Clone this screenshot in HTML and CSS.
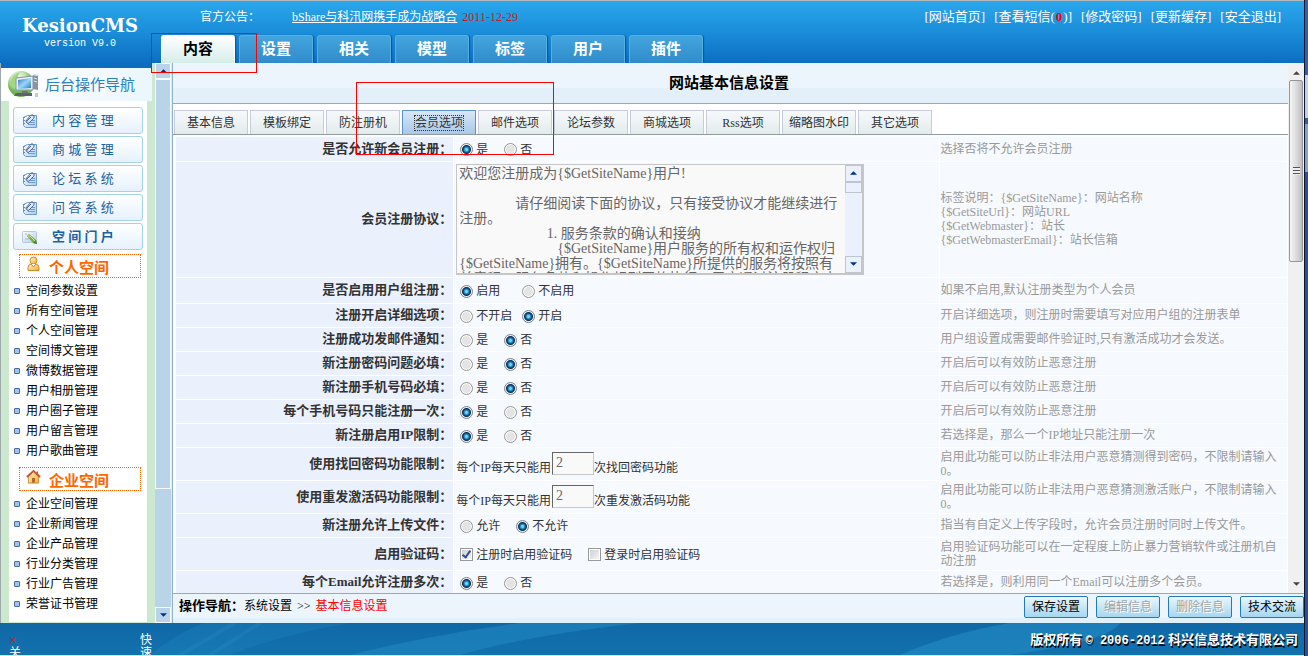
FILE: index.html
```html
<!DOCTYPE html>
<html lang="zh-CN">
<head>
<meta charset="utf-8">
<title>KesionCMS</title>
<link rel="stylesheet" href="styles.css">
</head>
<body>
<svg class="sprite" aria-hidden="true">
  <defs>
    <linearGradient id="paper" x1="0" y1="0" x2="1" y2="1"><stop offset="0" stop-color="#fff"/><stop offset="1" stop-color="#a9cbf0"/></linearGradient>
    <radialGradient id="globe" cx=".4" cy=".3"><stop offset="0" stop-color="#fff"/><stop offset=".6" stop-color="#c3e2b0"/><stop offset="1" stop-color="#6fb552"/></radialGradient>
    <linearGradient id="screen" x1="0" y1="0" x2="1" y2="1"><stop offset="0" stop-color="#2d76bd"/><stop offset=".5" stop-color="#9bd6f7"/><stop offset="1" stop-color="#2377c4"/></linearGradient>
    <linearGradient id="gold" x1="0" y1="0" x2="1" y2="1"><stop offset="0" stop-color="#fff6d0"/><stop offset="1" stop-color="#f3ad2e"/></linearGradient>
    <symbol id="doc" viewBox="0 0 16 16">
      <path d="M5.500 2.500h9v12h-11l-2-2v-8z" fill="url(#paper)" stroke="#6f9ad0"/>
      <path d="M1 4.500h2M1 7.500h2M1 10.500h2" stroke="#5c8bc6"/>
      <path d="M9 7.500h4M7 9.500h6M6 11.500h7" stroke="#6d9bd0"/>
      <path d="M3.500 8.500l5-6q1.500-1.500 3 0t0 3L7 10q-1 1-2 0t0-2l4-4" fill="none" stroke="#51698d"/>
    </symbol>
    <symbol id="card" viewBox="0 0 16 16">
      <rect x=".5" y="2.500" width="14" height="11" rx="1" fill="url(#paper)" stroke="#b8c8dd"/>
      <path d="M3 5h2M3 10h4" stroke="#9fb9d8"/>
      <path d="M7 5l7 6 1 4-4-1-6-7z" fill="#72b52e"/><path d="M7 5l-2 2 2 2 2-2z" fill="#e5ad52"/><path d="M14 11l1 4-4-1z" fill="#567a2d"/><path d="M8 7l5 5" stroke="#c4e994"/>
    </symbol>
    <symbol id="person" viewBox="0 0 14 16">
      <path d="M1.500 14.500v-3q0-3 3-3.500h5q3 .5 3 3.500v3z" fill="url(#gold)" stroke="#cd8b2c"/>
      <circle cx="7" cy="4.500" r="3.500" fill="url(#gold)" stroke="#cd8b2c"/><path d="M4.500 8l2.500 3 2.500-3" fill="#fff" stroke="#cd8b2c"/>
    </symbol>
    <symbol id="house" viewBox="0 0 16 16">
      <path d="M2.500 7v7.500h11V7L8 2z" fill="url(#gold)" stroke="#c88a35"/><path d="M6.500 14V9h3v5z" fill="#b06222"/><path d="M1 8l7-6.500L15 8" fill="none" stroke="#cf5022" stroke-width="2"/><path d="M12 2v3" stroke="#b75a2d" stroke-width="1.500"/>
    </symbol>
    <symbol id="computer" viewBox="0 0 34 32">
      <circle cx="14" cy="15" r="13" fill="url(#globe)"/><path d="M3 13q3-8 10-10-3 5-2 8l-4 8q-4-2-4-6" fill="#a5d681"/>
      <path d="M26 6l5 1v14l-5-1z" fill="#8a949e"/><path d="M26 6l2-1 4 1-1 1z" fill="#d7dde3"/><path d="M27 9l3 1M27 12l3 1" stroke="#e0e8ef"/>
      <path d="M9 9l17-2v14L9 21z" fill="#e8eff5" stroke="#8794a1"/><path d="M11 11l13-2v10l-13 1z" fill="url(#screen)"/><path d="M15 22h6v2h-6z" fill="#6c7782"/><path d="M9 24h16v3H7z" fill="#5a626a"/><path d="M28 24h3v4h-3z" fill="#c3cad0"/>
    </symbol>
    <symbol id="up" viewBox="0 0 8 4"><path d="M0 4l4-4 4 4z" fill="currentColor"/></symbol>
    <symbol id="down" viewBox="0 0 8 4"><path d="M0 0l4 4 4-4z" fill="currentColor"/></symbol>
  </defs>
</svg>
<div class="window">
  <div class="app">
    <header class="header">
      <div class="brand"><strong class="brand-name">KesionCMS</strong><span class="brand-version">version V9.0</span></div>
      <div class="header-body">
        <div class="header-top">
          <div class="notice"><span class="notice-label">官方公告：</span><a href="#">bShare与科汛网携手成为战略合</a><span class="notice-date">2011-12-29</span></div>
          <nav class="user-links"><a href="#">[网站首页]</a><a href="#">[查看短信(<b>0</b>)]</a><a href="#">[修改密码]</a><a href="#">[更新缓存]</a><a href="#">[安全退出]</a></nav>
        </div>
        <nav class="main-tabs">
          <a class="main-tab is-active" href="#">内容</a><a class="main-tab" href="#">设置</a><a class="main-tab" href="#">相关</a><a class="main-tab" href="#">模型</a><a class="main-tab" href="#">标签</a><a class="main-tab" href="#">用户</a><a class="main-tab" href="#">插件</a>
        </nav>
      </div>
    </header>

    <div class="middle">
      <aside class="sidebar">
        <h2 class="sidebar-title"><svg><use href="#computer"/></svg>后台操作导航</h2>
        <div class="sidebar-body">
          <button class="menu-btn"><svg><use href="#doc"/></svg>内 容 管 理</button>
          <button class="menu-btn"><svg><use href="#doc"/></svg>商 城 管 理</button>
          <button class="menu-btn"><svg><use href="#doc"/></svg>论 坛 系 统</button>
          <button class="menu-btn"><svg><use href="#doc"/></svg>问 答 系 统</button>
          <button class="menu-btn is-open"><svg><use href="#card"/></svg>空 间 门 户</button>
          <h3 class="group"><svg><use href="#person"/></svg><span>个人空间</span></h3>
          <ul class="links">
            <li><a href="#">空间参数设置</a></li><li><a href="#">所有空间管理</a></li><li><a href="#">个人空间管理</a></li><li><a href="#">空间博文管理</a></li><li><a href="#">微博数据管理</a></li><li><a href="#">用户相册管理</a></li><li><a href="#">用户圈子管理</a></li><li><a href="#">用户留言管理</a></li><li><a href="#">用户歌曲管理</a></li>
          </ul>
          <h3 class="group"><svg><use href="#house"/></svg><span>企业空间</span></h3>
          <ul class="links">
            <li><a href="#">企业空间管理</a></li><li><a href="#">企业新闻管理</a></li><li><a href="#">企业产品管理</a></li><li><a href="#">行业分类管理</a></li><li><a href="#">行业广告管理</a></li><li><a href="#">荣誉证书管理</a></li>
          </ul>
        </div>
      </aside>
      <div class="side-scroll"><span class="side-arrow"><svg><use href="#up"/></svg></span><span class="side-thumb"></span><span class="side-arrow"><svg><use href="#down"/></svg></span></div>

      <main class="main">
        <div class="content">
          <div class="page">
            <h1 class="page-title">网站基本信息设置</h1>
            <nav class="tabs">
              <button class="tab">基本信息</button><button class="tab">模板绑定</button><button class="tab">防注册机</button><button class="tab is-active"><span>会员选项</span></button><button class="tab">邮件选项</button><button class="tab">论坛参数</button><button class="tab">商城选项</button><button class="tab">Rss选项</button><button class="tab">缩略图水印</button><button class="tab">其它选项</button>
            </nav>
            <div class="form-area">
            <table class="form">
              <tr><th>是否允许新会员注册：</th><td><div class="options"><label><input type="radio" name="reg" checked>是</label><label><input type="radio" name="reg">否</label></div></td><td class="note">选择否将不允许会员注册</td></tr>
              <tr class="row-agreement"><th><label for="agreement">会员注册协议：</label></th><td><div class="agreement"><textarea id="agreement" wrap="off">欢迎您注册成为{$GetSiteName}用户!

　　　　请仔细阅读下面的协议，只有接受协议才能继续进行
注册。
　　　　　　 1. 服务条款的确认和接纳
　　　　　　　{$GetSiteName}用户服务的所有权和运作权归
{$GetSiteName}拥有。{$GetSiteName}所提供的服务将按照有
关章程、服务条款和操作规则严格执行。用户通过注册程序点</textarea><div class="area-scroll"><span class="area-arrow"><svg><use href="#up"/></svg></span><span class="area-thumb"></span><span class="area-arrow area-arrow-down"><svg><use href="#down"/></svg></span></div></div></td><td class="note">标签说明：{$GetSiteName}：网站名称<br>{$GetSiteUrl}：网站URL<br>{$GetWebmaster}：站长<br>{$GetWebmasterEmail}：站长信箱</td></tr>
              <tr class="row-group"><th>是否启用用户组注册：</th><td><div class="options options-wide"><label><input type="radio" name="grp" checked>启用</label><label><input type="radio" name="grp">不启用</label></div></td><td class="note">如果不启用,默认注册类型为个人会员</td></tr>
              <tr><th>注册开启详细选项：</th><td><div class="options options-tight"><label><input type="radio" name="detail">不开启</label><label><input type="radio" name="detail" checked>开启</label></div></td><td class="note">开启详细选项，则注册时需要填写对应用户组的注册表单</td></tr>
              <tr><th>注册成功发邮件通知：</th><td><div class="options"><label><input type="radio" name="mail">是</label><label><input type="radio" name="mail" checked>否</label></div></td><td class="note">用户组设置成需要邮件验证时,只有激活成功才会发送。</td></tr>
              <tr><th>新注册密码问题必填：</th><td><div class="options"><label><input type="radio" name="question">是</label><label><input type="radio" name="question" checked>否</label></div></td><td class="note">开启后可以有效防止恶意注册</td></tr>
              <tr><th>新注册手机号码必填：</th><td><div class="options"><label><input type="radio" name="mobile">是</label><label><input type="radio" name="mobile" checked>否</label></div></td><td class="note">开启后可以有效防止恶意注册</td></tr>
              <tr><th>每个手机号码只能注册一次：</th><td><div class="options"><label><input type="radio" name="once" checked>是</label><label><input type="radio" name="once">否</label></div></td><td class="note">开启后可以有效防止恶意注册</td></tr>
              <tr><th>新注册启用IP限制：</th><td><div class="options"><label><input type="radio" name="ip" checked>是</label><label><input type="radio" name="ip">否</label></div></td><td class="note">若选择是，那么一个IP地址只能注册一次</td></tr>
              <tr class="row-tall"><th>使用找回密码功能限制：</th><td><label class="limit">每个IP每天只能用<input type="text" value="2">次找回密码功能</label></td><td class="note">启用此功能可以防止非法用户恶意猜测得到密码，不限制请输入0。</td></tr>
              <tr class="row-tall"><th>使用重发激活码功能限制：</th><td><label class="limit">每个IP每天只能用<input type="text" value="2">次重发激活码功能</label></td><td class="note">启用此功能可以防止非法用户恶意猜测激活账户，不限制请输入0。</td></tr>
              <tr><th>新注册允许上传文件：</th><td><div class="options"><label><input type="radio" name="upload">允许</label><label><input type="radio" name="upload" checked>不允许</label></div></td><td class="note">指当有自定义上传字段时，允许会员注册时同时上传文件。</td></tr>
              <tr class="row-tall"><th>启用验证码：</th><td><div class="options"><label><input type="checkbox" checked>注册时启用验证码</label><label><input type="checkbox">登录时启用验证码</label></div></td><td class="note">启用验证码功能可以在一定程度上防止暴力营销软件或注册机自动注册</td></tr>
              <tr><th>每个Email允许注册多次：</th><td><div class="options"><label><input type="radio" name="email" checked>是</label><label><input type="radio" name="email">否</label></div></td><td class="note">若选择是，则利用同一个Email可以注册多个会员。</td></tr>
            </table>
            </div>
          </div>
          <div class="page-scroll"><svg><use href="#up"/></svg><span class="page-thumb"><i></i></span><svg><use href="#down"/></svg></div>
        </div>
        <div class="actions">
          <p class="crumbs"><b>操作导航：</b>系统设置<span class="crumb-sep">&gt;&gt;</span><em>基本信息设置</em></p>
          <div class="buttons"><button class="btn">保存设置</button><button class="btn" disabled>编辑信息</button><button class="btn" disabled>删除信息</button><button class="btn">技术交流</button></div>
        </div>
      </main>
    </div>

    <footer class="footer">
      <svg class="waves" preserveAspectRatio="none" viewBox="0 0 1304 32"><path d="M150 32Q180 8 205 0H350Q280 12 230 32z" fill="#2187c2" opacity=".3"/><path d="M180 32L235 0M210 32L260 0" stroke="#3fa0d5" stroke-width="4" opacity=".15"/><path d="M350 32Q430 12 520 0H640Q530 12 460 32z" fill="#2187c2" opacity=".6"/><path d="M900 32Q950 10 1010 0H1120Q1110 18 1010 32z" fill="#2187c2" opacity=".7"/></svg>
      <div class="foot-left"><a class="foot-close" href="#"><i>×</i>关</a><a class="foot-quick" href="#">快速</a></div>
      <p class="copyright">版权所有 <span>© 2006-2012</span> 科兴信息技术有限公司</p>
    </footer>
  </div>
  <div class="edge"></div>
</div>
<div class="mark mark-menu"></div>
<div class="mark mark-tab"></div>
</body>
</html>
```
FILE: styles.css
```css
*, *::before, *::after { box-sizing: border-box; }
body, h1, h2, h3, p, ul { margin: 0; padding: 0; }
body { font: 12px/14px "Liberation Serif", "Noto Sans CJK SC", sans-serif; color: #000; overflow: hidden; }
button, input, textarea { font: inherit; }
a { color: inherit; text-decoration: none; }
ul { list-style: none; }
.sprite { position: absolute; width: 0; height: 0; }
.window { display: flex; height: 100vh; }
.app { flex: 1; min-width: 0; display: flex; flex-direction: column; }
.edge { width: 4px; border-left: 1px solid #0a1530; background: linear-gradient(#3a5f9f 0 75px, #c4d0e2 75px 118px, #3c5c9a 118px 124px, #8ba1c4 124px 172px, #2c5093 172px); }

/* Header */
.header { flex: none; display: flex; height: 63px; border-top: 1px solid #b5b9bb; background: linear-gradient(#2aa7ec, #1b8dd9 50%, #0c6ec0); color: #fff; }
.brand { width: 160px; padding-top: 13px; display: flex; flex-direction: column; align-items: center; }
.brand-name { font: bold 18px/23px "DejaVu Serif", serif; }
.brand-version { font: 10px/13px "Liberation Mono", monospace; }
.header-body { flex: 1; display: flex; flex-direction: column; justify-content: space-between; }
.header-top { display: flex; justify-content: space-between; align-items: center; height: 32px; padding: 0 23px 0 40px; }
.notice { display: flex; }
.notice-label { width: 92px; }
.notice a { text-decoration: underline; }
.notice-date { margin-left: 5px; color: #d8141c; }
.user-links { display: flex; gap: 9px; font-size: 13px; }
.user-links b { padding: 0 1px; color: #f00; }
.main-tabs { display: flex; gap: 4px; padding-left: 1px; }
.main-tab { width: 74px; height: 28px; border: 1px solid #56b0e3; border-bottom: 0; border-radius: 3px 3px 0 0; box-shadow: 1px 0 1px #07549a; background: linear-gradient(#43a5de, #308bca); font-size: 15px; font-weight: bold; line-height: 26px; text-align: center; }
.main-tab.is-active { background: linear-gradient(#fff, #d5ede9); border-color: #fff; color: #000; }

/* Sidebar */
.middle { flex: 1; min-height: 0; display: flex; }
.sidebar { width: 155px; border-left: 1px solid #9fa9ae; background: #cce8cf; overflow: hidden; }
.sidebar-title { display: flex; align-items: center; gap: 3px; height: 38px; margin-right: 3px; padding-left: 5px; border-top: 5px solid #0c6cbd; background: linear-gradient(100deg, #fff, #eaf5fd); color: #2a80c2; font-size: 15px; font-weight: normal; }
.sidebar-title svg { width: 36px; height: 32px; }
.sidebar-body { margin: 0 8px; padding: 6px 4px; background: #fff; }
.menu-btn { display: flex; align-items: center; gap: 14px; width: 100%; height: 27px; margin-bottom: 2px; padding: 0 8px; border: 1px solid #a3d4e3; border-radius: 3px; background: linear-gradient(#fff, #e6f1fd); color: #1c629d; font-size: 13px; }
.menu-btn svg { width: 16px; height: 16px; }
.menu-btn.is-open { font-weight: bold; }
.group { display: flex; align-items: center; gap: 8px; height: 24px; margin: 4px 2px 0 6px; padding-left: 6px; border: 1px dotted #f60; color: #f60; font-size: 15px; }
.group svg { width: 15px; height: 16px; margin-bottom: 4px; }
.group span { padding-top: 4px; }
.links { padding: 3px 0 2px; }
.links li { display: flex; align-items: center; gap: 6px; height: 20px; padding-left: 1px; }
.links li::before { content: ""; width: 6px; height: 6px; border: 1px solid #49699a; border-radius: 1px; background: #9fc5f6; }
.side-scroll { width: 17px; display: flex; flex-direction: column; background: #b9d3e9; border-right: 1px solid #dcebf7; color: #003087; }
.side-arrow { display: flex; align-items: center; justify-content: center; height: 16px; border: 1px solid #f5faff; background: #b9d3e9; }
.side-arrow svg, .area-arrow svg { width: 7px; height: 4px; }
.side-thumb { height: 410px; border: 1px solid #f5faff; }
.side-scroll .side-arrow:last-child { margin-top: auto; }

/* Main panel */
.main { flex: 1; min-width: 0; display: flex; flex-direction: column; border-left: 1px solid #8fb2c8; }
.content { flex: 1; min-height: 0; display: flex; background: #fff; }
.page { flex: 1; min-width: 0; overflow: hidden; }
.page-title { height: 41px; padding-right: 3px; border-bottom: 1px solid #83afc8; background: linear-gradient(#edf5fc 0 25px, #e3f0fa 25px); font-size: 15px; line-height: 41px; text-align: center; }
.tabs { display: flex; gap: 2px; height: 31px; padding: 6px 0 0 1px; border-bottom: 1px solid #8f9a9b; }
.tab { width: 74px; height: 24px; padding: 0; border: 1px solid #c8cbe0; border-bottom: 0; background: linear-gradient(#f7f9fb, #e3ebec); color: #333; line-height: 20px; }
.tab.is-active { border-color: #5b92cc; background: linear-gradient(#d7e8f8, #a9c8e8); }
.tab.is-active span { outline: 1px dotted #333; }
.form-area { padding: 2px 1px 0 3px; background: #fbfdff; }
.form { width: 100%; table-layout: fixed; border-collapse: collapse; color: #333; }
.form th, .form td { height: 24px; padding: 0 1px; border-bottom: 1px solid #fff; background: #f6f9fe; overflow: hidden; }
.form th { width: 25%; padding-right: 1px; background: #eaf0fc; font-size: 13px; text-align: right; }
.form td { padding-left: 2px; border-left: 1px solid #fff; }
.form .note { width: 348px; padding-left: 1px; color: #999; }
.form .row-agreement th, .form .row-agreement td { height: 116px; }
.form .row-group th, .form .row-group td { height: 26px; }
.form .row-tall th, .form .row-tall td { height: 33px; }
.options { display: flex; gap: 16px; padding: 2px 0 0 4px; }
.options-wide { gap: 22px; }
.options-tight { gap: 10px; }
.options label { display: flex; align-items: center; gap: 3px; }
.options input { appearance: none; width: 13px; height: 13px; margin: 0; border: 1px solid #999; background: #e4e4e4; box-shadow: inset 0 0 0 1px #fff; }
.options input[type="radio"] { border-radius: 50%; }
.options input[type="radio"]:checked { border-color: #7c868c; background: radial-gradient(circle at 50% 50%, #6bd5f7 0 1px, #075a99 3px, #0b2f55 4px, #eee 5px); box-shadow: none; }
.options input[type="checkbox"] { background: linear-gradient(135deg, #c8cdd0, #f8f8f8); }
.options input[type="checkbox"]:checked::after { content: ""; display: block; width: 5px; height: 9px; margin-left: 3px; border: solid #2e4d9a; border-width: 0 2px 2px 0; transform: rotate(35deg); }
.agreement { display: flex; width: 408px; max-width: 100%; height: 111px; border: 2px solid #c6c6c6; border-width: 1px 2px 2px 1px; background: #f9f9f9; }
.agreement textarea { flex: 1; min-width: 0; padding: 1px 2px; border: 0; background: none; resize: none; overflow: hidden; color: #666; font-size: 14px; line-height: 15px; }
.area-scroll { width: 17px; display: flex; flex-direction: column; background: #eaf1fc; color: #003087; }
.area-arrow { display: flex; align-items: center; justify-content: center; height: 17px; border: 1px solid #bcc6d2; }
.area-thumb { height: 11px; border: 1px solid #bcc6d2; }
.area-arrow-down { margin-top: auto; }
.limit { display: flex; align-items: flex-end; }
.limit input { width: 42px; height: 23px; margin-left: 1px; padding: 0 3px 2px; border: 1px solid #c8c8c8; border-top-color: #666; border-left-color: #666; background: #f9f9f9; color: #666; font-size: 14px; }
.page-scroll { width: 16px; display: flex; flex-direction: column; align-items: center; padding: 8px 1px 7px; background: #f0f0f0; color: #444; }
.page-scroll svg { width: 7px; height: 4px; }
.page-thumb { display: flex; align-items: center; justify-content: center; width: 14px; height: 182px; margin: 5px 0 auto; border: 1px solid #969696; border-radius: 2px; background: linear-gradient(90deg, #f5f5f5, #ddd 50%, #bfbfc3); }
.page-thumb i { width: 7px; height: 8px; background: repeating-linear-gradient(#555 0 1px, #eee 1px 3px); }

/* Action bar */
.actions { flex: none; display: flex; justify-content: space-between; align-items: flex-start; height: 30px; padding-top: 2px; border-top: 1px solid #83afc8; background: linear-gradient(#edf5fc 0 24px, #e0f1fb 24px); }
.crumbs { padding-left: 6px; line-height: 20px; }
.crumbs b { font-size: 13px; }
.crumb-sep { margin: 0 5px; }
.crumbs em { color: #f00; font-style: normal; }
.buttons { display: flex; gap: 8px; }
.btn { width: 64px; height: 22px; padding: 0; border: 1px solid #2579b9; border-radius: 2px; background: linear-gradient(#eaf7fe, #a5d6ee); color: #000; }
.btn:disabled { color: #a0a5a8; text-shadow: 1px 1px #fff; }

/* Footer */
.footer { flex: none; position: relative; display: flex; justify-content: space-between; height: 33px; border-bottom: 1px solid #d5e7f5; background: linear-gradient(#1068a5, #1272ae); color: #fff; overflow: hidden; }
.waves { position: absolute; width: 100%; height: 100%; }
.foot-left { position: relative; display: flex; gap: 119px; padding: 11px 0 0 9px; }
.foot-left a { width: 12px; line-height: 13px; }
.foot-close i { display: block; color: #d5141c; font-size: 14px; font-style: normal; }
.copyright { position: relative; padding-right: 6px; font-size: 13px; font-weight: bold; line-height: 33px; text-shadow: 1px 2px #000; }
.copyright span { font-family: "Liberation Mono", monospace; font-size: 12px; }

/* Annotation frames */
.mark { position: absolute; border: 1px solid #f00; pointer-events: none; }
.mark-menu { left: 151px; top: 33px; width: 106px; height: 40px; }
.mark-tab { left: 356px; top: 82px; width: 198px; height: 73px; }
```
